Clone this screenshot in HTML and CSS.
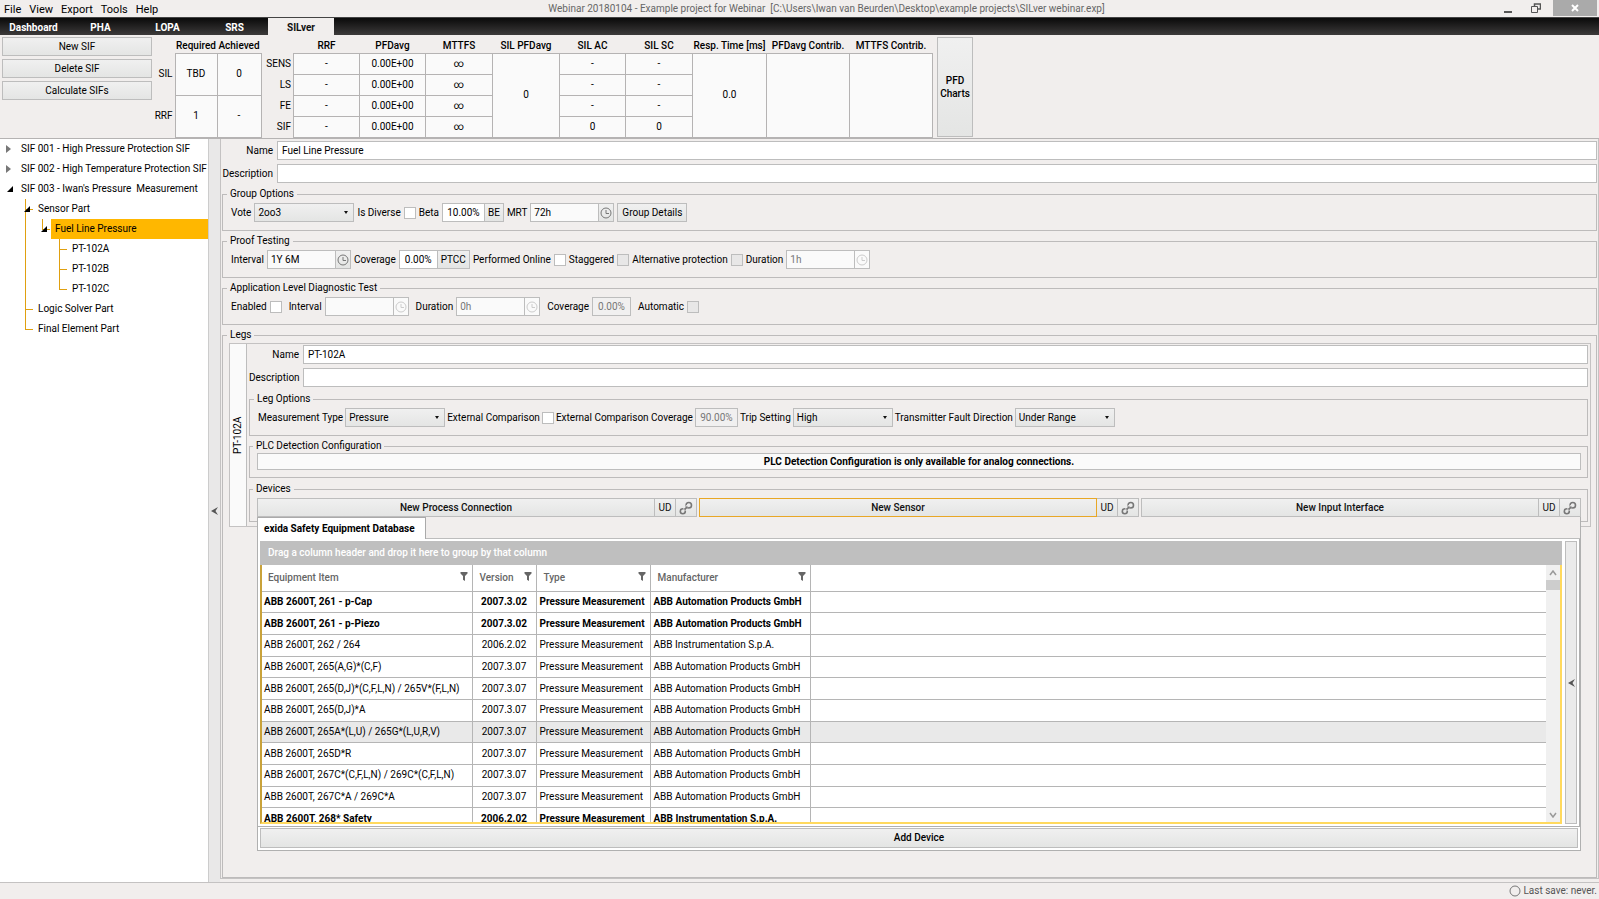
FILE: index.html
```html
<!DOCTYPE html>
<html lang="en">
<head>
<meta charset="utf-8">
<title>Webinar 20180104 - Example project for Webinar</title>
<link rel="stylesheet" href="styles.css">
</head>
<body>
<svg class="defs" aria-hidden="true">
  <symbol id="clock" viewBox="0 0 12 12"><circle cx="6" cy="6" r="5" fill="none" stroke="currentColor"/><path d="M6 3v3.500h3" fill="none" stroke="currentColor"/></symbol>
  <symbol id="link" viewBox="0 0 14 14"><g fill="none" stroke="currentColor" stroke-width="1.600"><circle cx="9.800" cy="4.200" r="2.700"/><circle cx="3.800" cy="10.200" r="2.500"/></g><path d="M7 4.500l2 2M4.500 7.500l2 2" stroke="#ececec" stroke-width="1.500"/><path d="M5.500 8.600l3-3" stroke="currentColor" stroke-width="1.600"/></symbol>
  <symbol id="funnel" viewBox="0 0 8 9"><path d="M0.500 0h7v1.500L5 4V9L3 7.800V4L0.500 1.500z" fill="currentColor"/></symbol>
  <symbol id="left" viewBox="0 0 7 8"><path d="M7 0L4.500 4L7 8L0 4z" fill="currentColor"/></symbol>
</svg>

<header class="titlebar">
  <nav class="menu">
    <button>File</button><button>View</button><button>Export</button><button>Tools</button><button>Help</button>
  </nav>
  <div class="title">Webinar 20180104 - Example project for Webinar&nbsp; [C:\Users\Iwan van Beurden\Desktop\example projects\SILver webinar.exp]</div>
  <div class="window-buttons">
    <button aria-label="Minimize"><svg width="10" height="10"><path d="M1 9h8" stroke="#555" stroke-width="2"/></svg></button>
    <button aria-label="Restore"><svg width="10" height="10"><path d="M3.500 3V1h6v5H7" fill="none" stroke="#555" stroke-width="1.500"/><path d="M.5 3.500h6v6h-6z" fill="#f3efee" stroke="#555"/></svg></button>
    <button class="close" aria-label="Close"><svg width="8" height="8"><path d="M1 1l6 6M7 1L1 7" stroke="#fff" stroke-width="2"/></svg></button>
  </div>
</header>

<nav class="tabs">
  <button>Dashboard</button><button>PHA</button><button>LOPA</button><button>SRS</button><button class="active">SILver</button>
</nav>

<section class="summary">
  <div class="sif-actions">
    <button class="btn">New SIF</button>
    <button class="btn">Delete SIF</button>
    <button class="btn">Calculate SIFs</button>
  </div>
  <table class="results">
    <colgroup><col class="c23"><col class="c42"><col class="c44"></colgroup>
    <tr><td></td><th>Required</th><th>Achieved</th></tr>
    <tr class="tall"><th>SIL</th><td>TBD</td><td>0</td></tr>
    <tr class="tall"><th>RRF</th><td>1</td><td>-</td></tr>
  </table>
  <table class="results">
    <colgroup><col class="c32"><col class="c66"><col class="c66"><col class="c67"><col class="c67"><col class="c66"><col class="c67"><col class="c74"><col class="c83"><col class="c83"></colgroup>
    <tr><td></td><th>RRF</th><th>PFDavg</th><th>MTTFS</th><th>SIL PFDavg</th><th>SIL AC</th><th>SIL SC</th><th>Resp. Time [ms]</th><th>PFDavg Contrib.</th><th>MTTFS Contrib.</th></tr>
    <tr><th>SENS</th><td>-</td><td>0.00E+00</td><td>∞</td><td rowspan="4">0</td><td>-</td><td>-</td><td rowspan="4">0.0</td><td rowspan="4"></td><td rowspan="4"></td></tr>
    <tr><th>LS</th><td>-</td><td>0.00E+00</td><td>∞</td><td>-</td><td>-</td></tr>
    <tr><th>FE</th><td>-</td><td>0.00E+00</td><td>∞</td><td>-</td><td>-</td></tr>
    <tr><th>SIF</th><td>-</td><td>0.00E+00</td><td>∞</td><td>0</td><td>0</td></tr>
  </table>
  <button class="btn charts">PFD<br>Charts</button>
</section>

<main class="workspace">
  <aside class="tree">
    <ul>
      <li><div class="node"><i class="closed"></i><span>SIF 001 - High Pressure Protection SIF</span></div></li>
      <li><div class="node"><i class="closed"></i><span>SIF 002 - High Temperature Protection SIF</span></div></li>
      <li><div class="node"><i class="open"></i><span>SIF 003 - Iwan's Pressure&nbsp; Measurement</span></div>
        <ul>
          <li><div class="node"><i class="open"></i><span>Sensor Part</span></div>
            <ul>
              <li><div class="node selected"><i class="open"></i><span>Fuel Line Pressure</span></div>
                <ul>
                  <li><div class="node"><i></i><span>PT-102A</span></div></li>
                  <li><div class="node"><i></i><span>PT-102B</span></div></li>
                  <li><div class="node"><i></i><span>PT-102C</span></div></li>
                </ul>
              </li>
            </ul>
          </li>
          <li><div class="node"><i></i><span>Logic Solver Part</span></div></li>
          <li><div class="node"><i></i><span>Final Element Part</span></div></li>
        </ul>
      </li>
    </ul>
  </aside>
  <button class="splitter" aria-label="Collapse tree"><svg width="7" height="8"><use href="#left"/></svg></button>

  <section class="editor">
    <div class="field"><label for="gname">Name</label><input id="gname" value="Fuel Line Pressure"></div>
    <div class="field"><label for="gdesc">Description</label><input id="gdesc"></div>

    <fieldset>
      <legend>Group Options</legend>
      <div class="options">
        <label for="vote">Vote</label><span class="select"><select id="vote"><option>2oo3</option></select></span>
        <label for="diverse">Is Diverse</label><input type="checkbox" id="diverse">
        <label for="beta">Beta</label><span class="combo"><input id="beta" class="percent" value="10.00%"><button class="btn">BE</button></span>
        <label for="mrt">MRT</label><span class="combo"><input id="mrt" class="time" value="72h"><button class="btn clock" aria-label="Pick MRT"><svg><use href="#clock"/></svg></button></span>
        <button class="btn details">Group Details</button>
      </div>
    </fieldset>

    <fieldset>
      <legend>Proof Testing</legend>
      <div class="options">
        <label for="pint">Interval</label><span class="combo"><input id="pint" class="time" value="1Y 6M"><button class="btn clock" aria-label="Pick interval"><svg><use href="#clock"/></svg></button></span>
        <label for="pcov">Coverage</label><span class="combo"><input id="pcov" class="percent short" value="0.00%"><button class="btn">PTCC</button></span>
        <label for="online">Performed Online</label><input type="checkbox" id="online">
        <label for="stag">Staggered</label><input type="checkbox" id="stag" disabled>
        <label for="alt">Alternative protection</label><input type="checkbox" id="alt" disabled>
        <label for="pdur">Duration</label><span class="combo"><input id="pdur" class="time" value="1h" disabled><button class="btn clock" disabled aria-label="Pick duration"><svg><use href="#clock"/></svg></button></span>
      </div>
    </fieldset>

    <fieldset>
      <legend>Application Level Diagnostic Test</legend>
      <div class="options wide">
        <span><label for="den">Enabled</label><input type="checkbox" id="den"></span>
        <span><label for="dint">Interval</label><span class="combo"><input id="dint" class="time" disabled><button class="btn clock" disabled aria-label="Pick interval"><svg><use href="#clock"/></svg></button></span></span>
        <span><label for="ddur">Duration</label><span class="combo"><input id="ddur" class="time" value="0h" disabled><button class="btn clock" disabled aria-label="Pick duration"><svg><use href="#clock"/></svg></button></span></span>
        <span><label for="dcov">Coverage</label><input id="dcov" class="percent short" value="0.00%" disabled></span>
        <span><label for="auto">Automatic</label><input type="checkbox" id="auto" disabled></span>
      </div>
    </fieldset>

    <fieldset class="legs">
      <legend>Legs</legend>
      <div class="leg">
        <button class="leg-tab">PT-102A</button>
        <div class="leg-body">
          <div class="field"><label for="lname">Name</label><input id="lname" value="PT-102A"></div>
          <div class="field"><label for="ldesc">Description</label><input id="ldesc"></div>
          <fieldset>
            <legend>Leg Options</legend>
            <div class="options tight">
              <label for="mtype">Measurement Type</label><span class="select"><select id="mtype"><option>Pressure</option></select></span>
              <label for="ext">External Comparison</label><input type="checkbox" id="ext">
              <label for="extc">External Comparison Coverage</label><input id="extc" class="percent" value="90.00%" disabled>
              <label for="trip">Trip Setting</label><span class="select"><select id="trip"><option>High</option></select></span>
              <label for="fault">Transmitter Fault Direction</label><span class="select"><select id="fault"><option>Under Range</option></select></span>
            </div>
          </fieldset>
          <fieldset class="boxed">
            <legend>PLC Detection Configuration</legend>
            <p class="notice">PLC Detection Configuration is only available for analog connections.</p>
          </fieldset>
          <fieldset class="boxed devices">
            <legend>Devices</legend>
            <div class="device-bar">
              <div class="device"><button class="btn">New Process Connection</button><button class="btn">UD</button><button class="btn" aria-label="Link"><svg><use href="#link"/></svg></button></div>
              <div class="device"><button class="btn current">New Sensor</button><button class="btn">UD</button><button class="btn" aria-label="Link"><svg><use href="#link"/></svg></button></div>
              <div class="device"><button class="btn">New Input Interface</button><button class="btn">UD</button><button class="btn" aria-label="Link"><svg><use href="#link"/></svg></button></div>

              <div class="popup">
                <div class="popup-tabs"><button>exida Safety Equipment Database</button></div>
                <div class="popup-body">
                  <div class="grid">
                    <div class="group-bar">Drag a column header and drop it here to group by that column</div>
                    <div class="grid-view">
                      <div class="grid-rows">
                        <table class="equipment">
                          <colgroup><col class="item"><col class="version"><col class="type"><col class="maker"><col></colgroup>
                          <thead><tr>
                            <th>Equipment Item<svg><use href="#funnel"/></svg></th><th>Version<svg><use href="#funnel"/></svg></th><th>Type<svg><use href="#funnel"/></svg></th><th>Manufacturer<svg><use href="#funnel"/></svg></th><th></th>
                          </tr></thead>
                          <tbody>
                            <tr class="strong"><td>ABB 2600T, 261 - p-Cap</td><td>2007.3.02</td><td>Pressure Measurement</td><td>ABB Automation Products GmbH</td><td></td></tr>
                            <tr class="strong"><td>ABB 2600T, 261 - p-Piezo</td><td>2007.3.02</td><td>Pressure Measurement</td><td>ABB Automation Products GmbH</td><td></td></tr>
                            <tr><td>ABB 2600T, 262 / 264</td><td>2006.2.02</td><td>Pressure Measurement</td><td>ABB Instrumentation S.p.A.</td><td></td></tr>
                            <tr><td>ABB 2600T, 265(A,G)*(C,F)</td><td>2007.3.07</td><td>Pressure Measurement</td><td>ABB Automation Products GmbH</td><td></td></tr>
                            <tr><td>ABB 2600T, 265(D,J)*(C,F,L,N) / 265V*(F,L,N)</td><td>2007.3.07</td><td>Pressure Measurement</td><td>ABB Automation Products GmbH</td><td></td></tr>
                            <tr><td>ABB 2600T, 265(D,J)*A</td><td>2007.3.07</td><td>Pressure Measurement</td><td>ABB Automation Products GmbH</td><td></td></tr>
                            <tr class="hover"><td>ABB 2600T, 265A*(L,U) / 265G*(L,U,R,V)</td><td>2007.3.07</td><td>Pressure Measurement</td><td>ABB Automation Products GmbH</td><td></td></tr>
                            <tr><td>ABB 2600T, 265D*R</td><td>2007.3.07</td><td>Pressure Measurement</td><td>ABB Automation Products GmbH</td><td></td></tr>
                            <tr><td>ABB 2600T, 267C*(C,F,L,N) / 269C*(C,F,L,N)</td><td>2007.3.07</td><td>Pressure Measurement</td><td>ABB Automation Products GmbH</td><td></td></tr>
                            <tr><td>ABB 2600T, 267C*A / 269C*A</td><td>2007.3.07</td><td>Pressure Measurement</td><td>ABB Automation Products GmbH</td><td></td></tr>
                            <tr class="strong"><td>ABB 2600T, 268* Safety</td><td>2006.2.02</td><td>Pressure Measurement</td><td>ABB Instrumentation S.p.A.</td><td></td></tr>
                          </tbody>
                        </table>
                      </div>
                      <div class="scrollbar">
                        <svg width="8" height="6"><path d="M1 5l3-4 3 4" fill="none" stroke="#999" stroke-width="1.500"/></svg>
                        <span class="thumb"></span>
                        <svg width="8" height="6"><path d="M1 1l3 4 3-4" fill="none" stroke="#999" stroke-width="1.500"/></svg>
                      </div>
                    </div>
                  </div>
                  <button class="side" aria-label="Expand panel"><svg width="7" height="8"><use href="#left"/></svg></button>
                </div>
                <div class="popup-foot"><button class="btn">Add Device</button></div>
              </div>
            </div>
          </fieldset>
        </div>
      </div>
    </fieldset>
  </section>
</main>

<footer class="status"><svg width="12" height="12"><circle cx="6" cy="6" r="5" fill="none" stroke="#777"/></svg><span>Last save: never.</span></footer>
</body>
</html>
```
FILE: styles.css
```css
* { box-sizing: border-box; }
body {
  margin: 0;
  min-height: 100vh;
  display: flex;
  flex-direction: column;
  background: #f1eeed;
  color: #000;
  font: 10px/14px Roboto, "Open Sans", sans-serif;
}
button, input, select { font: inherit; color: inherit; margin: 0; border-radius: 0; }
button { padding: 0; border: 0; background: none; white-space: nowrap; }
ul { list-style: none; margin: 0; padding: 0; }
.defs { position: absolute; width: 0; height: 0; }

.titlebar { display: grid; grid-template-columns: 1fr auto 1fr; height: 17px; }
.menu { display: flex; gap: 8px; padding: 1px 0 0 4px; font-size: 11px; }
.title { line-height: 18px; color: #666; padding-left: 54px; }
.window-buttons { display: flex; justify-content: flex-end; gap: 18px; padding-right: 2px; }
.window-buttons button { display: flex; align-items: center; height: 16px; }
.window-buttons .close { width: 44px; justify-content: center; background: #aaa; margin-left: -6px; }

.tabs { display: flex; height: 18px; background: linear-gradient(#0a0a0a, #3c3a3a); border-top: 1px solid #444; }
.tabs button { width: 67px; padding-top: 2px; color: #fff; font-weight: 700; }
.tabs .active { width: 66px; background: #f1eeed; color: #111; }

.btn { height: 19px; border: 1px solid #bdbdbd; background: linear-gradient(#f0f0f0, #e4e5e4); display: flex; align-items: center; justify-content: center; }
.summary { display: flex; height: 104px; padding-top: 1px; border-bottom: 1px solid #b5b3b3; }
.sif-actions { display: flex; flex-direction: column; gap: 3px; width: 152px; padding: 1px 0 0 2px; }
.results { border-collapse: collapse; table-layout: fixed; width: auto; height: 101px; }
.results tr:first-child { height: 17px; }
.results tr:first-child th { vertical-align: bottom; }
.results tr { height: 21px; }
.results .tall { height: 42px; }
.results td, .results th { padding: 0; text-align: center; white-space: nowrap; line-height: 14px; }
.results th { font-weight: 500; }
.results td:not(:empty), .results td[rowspan] { border: 1px solid #b5b3b3; background: #fafafa; }
.results tr > th:first-child { text-align: right; padding-right: 2px; font-weight: 400; }
.c23 { width: 23px; } .c32 { width: 32px; } .c42 { width: 42px; } .c44 { width: 44px; }
.c66 { width: 66px; } .c67 { width: 67px; } .c74 { width: 74px; } .c83 { width: 83px; }
.charts { width: 36px; height: 100px; margin: 1px 0 0 4px; line-height: 13px; font-weight: 500; }

.workspace { flex: 1; display: flex; }
.tree { width: 208px; background: #fff; }
.tree ul ul { padding-left: 17px; }
.tree li { position: relative; }
.node { display: flex; align-items: center; height: 20px; white-space: nowrap; }
.node i { width: 13px; height: 20px; margin-right: 4px; display: flex; align-items: center; justify-content: flex-end; flex: none; z-index: 1; }
.node span { flex: 1; line-height: 20px; padding-left: 4px; }
.closed::before { content: ""; border: 4px solid transparent; border-left: 5px solid #777; border-right: 0; margin-right: 2px; }
.open::before { content: ""; border-left: 6px solid transparent; border-bottom: 6px solid #000; }
.selected span { background: #ffb700; }
.tree ul ul > li::before { content: ""; position: absolute; left: 8px; top: 0; bottom: 0; border-left: 1px solid #e0a010; }
.tree ul ul > li:last-child::before { bottom: auto; height: 10px; }
.tree ul ul > li::after { content: ""; position: absolute; left: 8px; top: 10px; width: 8px; border-top: 1px solid #e0a010; }

.splitter { width: 12px; display: flex; align-items: center; justify-content: center; background: #e9e8e8; border-left: 1px solid #ccc; color: #555; }
.editor { flex: 1; min-width: 0; display: flex; flex-direction: column; border: 1px solid #c4c2c2; border-top: 0; margin: 0 0 3px; padding: 2px 1px 0; }
.field { display: flex; align-items: center; gap: 4px; margin-bottom: 4px; }
.field label { width: 51px; text-align: right; white-space: nowrap; }
.field input { flex: 1; min-width: 0; height: 19px; border: 1px solid #bdbdbd; padding: 0 4px; background: #fff; }

fieldset { min-width: 0; margin: 0 0 3px; padding: 2px 8px 8px; border: 1px solid #bdbbbb; }
legend { padding: 0 3px; margin-left: -4px; height: 14px; line-height: 14px; }
.options, .options > span:not(.combo):not(.select) { display: flex; align-items: center; gap: 3px; white-space: nowrap; }
.options.wide { gap: 7px; }
.options.tight { gap: 2px; }
.options input:not([type]) { height: 19px; border: 1px solid #bdbdbd; background: #fff; padding: 0 3px; }
.options input.time { width: 69px; background: #fafafa; }
.options input.percent { width: 43px; text-align: center; }
.options input.short { width: 39px; }
.options input:disabled { color: #777; background: #f1f0f0; }
.options input.time:disabled { background: #fafafa; }
input[type="checkbox"] { appearance: none; width: 12px; height: 12px; border: 1px solid #bdbdbd; background: #fff; }
input[type="checkbox"]:disabled { background: #e8e7e7; }
.combo { display: flex; }
.combo .btn { border-left: 0; padding: 0 3px; }
.combo .clock { width: 15px; padding: 0; color: #777; }
.clock svg { width: 12px; height: 12px; flex: none; }
.combo .clock:disabled { color: #ccc; background: #fafafa; }
.details { padding: 0 4px; }
.select { position: relative; display: flex; }
.select select { appearance: none; width: 100px; height: 19px; padding: 0 3px; border: 1px solid #bdbdbd; background: linear-gradient(#f0f0f0, #e4e5e4); }
.select::after { content: ""; position: absolute; right: 6px; top: 8px; border: 2px solid transparent; border-top: 3px solid #111; border-bottom: 0; }

.editor > .legs { flex: 1; margin: 0; padding: 1px 5px 0 6px; }
.legs > legend { margin-left: -2px; }
.leg { display: flex; border: 1px solid #c4c2c2; height: 184px; }
.leg-tab { width: 17px; background: #fafafa; border-left: 1px solid #bdbdbd; writing-mode: vertical-rl; transform: rotate(180deg); }
.leg-body { flex: 1; min-width: 0; padding: 1px 2px 0; }
.leg-body fieldset { margin-bottom: 3px; }
.leg-body .field label { width: 50px; }
.leg-body .field + fieldset { margin-top: 5px; }
.leg-body .boxed { padding: 0 6px 7px 7px; }
.notice { margin: 0; height: 17px; line-height: 15px; border: 1px solid #bdbdbd; background: #fafafa; text-align: center; font-weight: 700; }
.leg-body .devices { margin: 4px 0 0; padding-top: 2px; padding-bottom: 4px; }
.device-bar { position: relative; display: grid; grid-template-columns: 1fr 1fr 1fr; gap: 2px; }
.device { display: flex; }
.device .btn { width: 21px; color: #111; }
.device .btn + .btn { border-left: 0; }
.device .btn:first-child { flex: 1; font-weight: 500; }
.device .btn:last-child { color: #777; }
.device .btn.current { border: 1px solid #e8a726; }
.device svg { width: 14px; height: 14px; }

.popup { position: absolute; left: 0; right: 0; top: 100%; z-index: 2; border: 1px solid #b0b0b0; border-top: 0; background: #f1eeed; }
.popup-tabs { height: 22px; border-bottom: 1px solid #bdbdbd; }
.popup-tabs button { height: 22px; padding: 0 6px; min-width: 168px; background: #fff; border-right: 1px solid #aaa; border-top: 1px solid #aaa; font-weight: 700; text-align: left; }
.popup-body { display: flex; gap: 3px; height: 288px; padding: 2px; background: #fff; border-right: 1px solid #b0b0b0; border-bottom: 1px solid #b0b0b0; }
.grid { flex: 1; min-width: 0; display: flex; flex-direction: column; }
.group-bar { height: 24px; line-height: 24px; padding-left: 8px; background: #bfbfbf; color: #fff; font-weight: 500; }
.grid-view { flex: 1; min-height: 0; display: flex; border: 2px solid #ffd95e; border-top: 0; border-left-color: #c9a23a; }
.grid-rows { flex: 1; min-width: 0; overflow: hidden; }
.equipment { width: 100%; height: 265px; table-layout: fixed; border-collapse: collapse; background: #fff; }
.equipment .item { width: 210px; } .equipment .version { width: 64px; } .equipment .type { width: 114px; } .equipment .maker { width: 160px; }
.equipment th, .equipment td { padding: 0 0 0 3px; text-align: left; white-space: nowrap; border-right: 1px solid #b5b5b5; border-bottom: 1px solid #b5b5b5; line-height: 14px; }
.equipment th:last-child, .equipment td:last-child { border-right: 0; }
.equipment td:first-child { padding-left: 2px; }
.equipment thead tr { height: 26px; }
.equipment th { padding: 0 4px 0 7px; font-weight: 500; color: #666; }
.equipment th:first-child { padding-left: 6px; }
.equipment th svg { float: right; width: 8px; height: 9px; margin-top: 1px; }
.equipment td:nth-child(2) { text-align: center; padding: 0; }
.strong { font-weight: 700; }
.hover { background: #e9e9e9; }
.scrollbar { width: 14px; display: flex; flex-direction: column; align-items: center; padding: 5px 0 4px; background: #f0f0f0; }
.scrollbar svg { flex: none; }
.scrollbar .thumb { width: 14px; height: 10px; margin: 4px 0 auto; background: #cdcdcd; }
.side { width: 12px; display: flex; align-items: center; justify-content: center; background: #ebebeb; border: 1px solid #bdbdbd; color: #555; }
.popup-foot { padding: 1px 2px 2px; background: #fff; }
.popup-foot .btn { width: 100%; height: 20px; font-weight: 500; }

.status { height: 17px; border-top: 1px solid #c4c2c2; display: flex; align-items: center; justify-content: flex-end; gap: 2px; padding-right: 2px; color: #555; }
```
